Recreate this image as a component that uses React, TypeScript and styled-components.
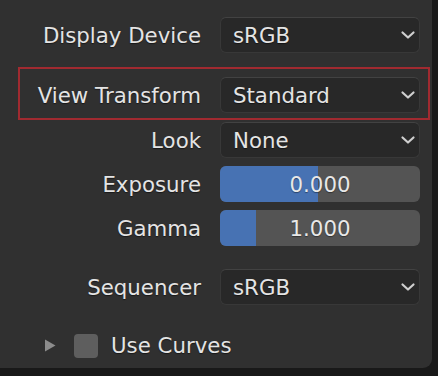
import React from 'react';
import styled, { createGlobalStyle } from 'styled-components';

const GlobalStyle = createGlobalStyle`
  html, body {
    margin: 0;
    padding: 0;
    background: #191919;
  }
  body {
    font-family: 'DejaVu Sans', 'Liberation Sans', sans-serif;
  }
`;

const Screen = styled.div`
  width: 438px;
  height: 376px;
  box-sizing: border-box;
  padding: 0 6px 8px 0;
  background: #191919;
  overflow: hidden;
  display: flex;
`;

const Panel = styled.div`
  flex: 1;
  background: #303030;
  border-bottom-right-radius: 9px;
  padding: 17px 0 0 20px;
  display: flex;
  flex-direction: column;
  align-items: flex-start;
`;

const Row = styled.div<{ $top?: number }>`
  display: grid;
  grid-template-columns: 181px 200px;
  column-gap: 19px;
  align-items: center;
  width: 400px;
  height: 36px;
  margin-top: ${(p) => p.$top ?? 8}px;
  position: relative;
`;

const Highlight = styled(Row)`
  &::after {
    content: '';
    position: absolute;
    top: -10px;
    bottom: -7px;
    left: -2px;
    right: -10px;
    border: 2px solid #a12a30;
    pointer-events: none;
  }
`;

const Label = styled.div`
  text-align: right;
  font-size: 21.3px;
  color: #e4e4e4;
  text-shadow: 0 1px 1px rgba(0, 0, 0, 0.5);
  white-space: nowrap;
`;

const Select = styled.div`
  height: 36px;
  box-sizing: border-box;
  background: #282828;
  border: 1px solid #383838;
  border-top-color: #424242;
  border-radius: 6px;
  display: flex;
  align-items: center;
  justify-content: space-between;
  padding: 0 2px 0 12px;
  font-size: 21.3px;
  color: #e4e4e4;
  text-shadow: 0 1px 1px rgba(0, 0, 0, 0.5);
`;

const Chevron = styled.svg`
  width: 18px;
  height: 18px;
  flex-shrink: 0;
`;

const Slider = styled.div`
  height: 36px;
  border-radius: 6px;
  background: #545454;
  position: relative;
  overflow: hidden;
  display: flex;
  align-items: center;
  justify-content: center;
  font-size: 21.3px;
  color: #e8e8e8;
  text-shadow: 0 1px 1px rgba(0, 0, 0, 0.4);
`;

const Fill = styled.div`
  position: absolute;
  left: 0;
  top: 0;
  bottom: 0;
  background: #4772b3;
`;

const SliderValue = styled.span`
  position: relative;
`;

const CurvesRow = styled.div`
  display: flex;
  align-items: center;
  margin-top: 28px;
  padding-left: 24px;
  height: 25px;
`;

const Triangle = styled.svg`
  width: 12px;
  height: 13px;
  margin-right: 18px;
`;

const Checkbox = styled.div`
  width: 24px;
  height: 24px;
  border-radius: 4px;
  background: #5e5e5e;
  margin-right: 13px;
`;

const CurvesLabel = styled.span`
  font-size: 21.3px;
  color: #e4e4e4;
  text-shadow: 0 1px 1px rgba(0, 0, 0, 0.5);
`;

function DownArrow() {
  return (
    <Chevron viewBox="0 0 18 18">
      <path d="M3.5 6.5 L9 11.5 L14.5 6.5" fill="none" stroke="#cfcfcf" strokeWidth="2.2" strokeLinecap="round" strokeLinejoin="round" />
    </Chevron>
  );
}

function Dropdown({ value }: { value: string }) {
  return (
    <Select>
      <span>{value}</span>
      <DownArrow />
    </Select>
  );
}

function NumberSlider({ value, fraction }: { value: string; fraction: number }) {
  return (
    <Slider>
      <Fill style={{ width: `${fraction * 100}%` }} />
      <SliderValue>{value}</SliderValue>
    </Slider>
  );
}

export default function App() {
  return (
    <Screen>
      <GlobalStyle />
      <Panel>
        <Row $top={0}>
          <Label>Display Device</Label>
          <Dropdown value="sRGB" />
        </Row>
        <Highlight $top={24}>
          <Label>View Transform</Label>
          <Dropdown value="Standard" />
        </Highlight>
        <Row $top={9}>
          <Label>Look</Label>
          <Dropdown value="None" />
        </Row>
        <Row>
          <Label>Exposure</Label>
          <NumberSlider value="0.000" fraction={0.49} />
        </Row>
        <Row>
          <Label>Gamma</Label>
          <NumberSlider value="1.000" fraction={0.18} />
        </Row>
        <Row $top={23}>
          <Label>Sequencer</Label>
          <Dropdown value="sRGB" />
        </Row>
        <CurvesRow>
          <Triangle viewBox="0 0 12 13">
            <path d="M1 0.5 L11.5 6.5 L1 12.5 Z" fill="#8c8c8c" />
          </Triangle>
          <Checkbox />
          <CurvesLabel>Use Curves</CurvesLabel>
        </CurvesRow>
      </Panel>
    </Screen>
  );
}
